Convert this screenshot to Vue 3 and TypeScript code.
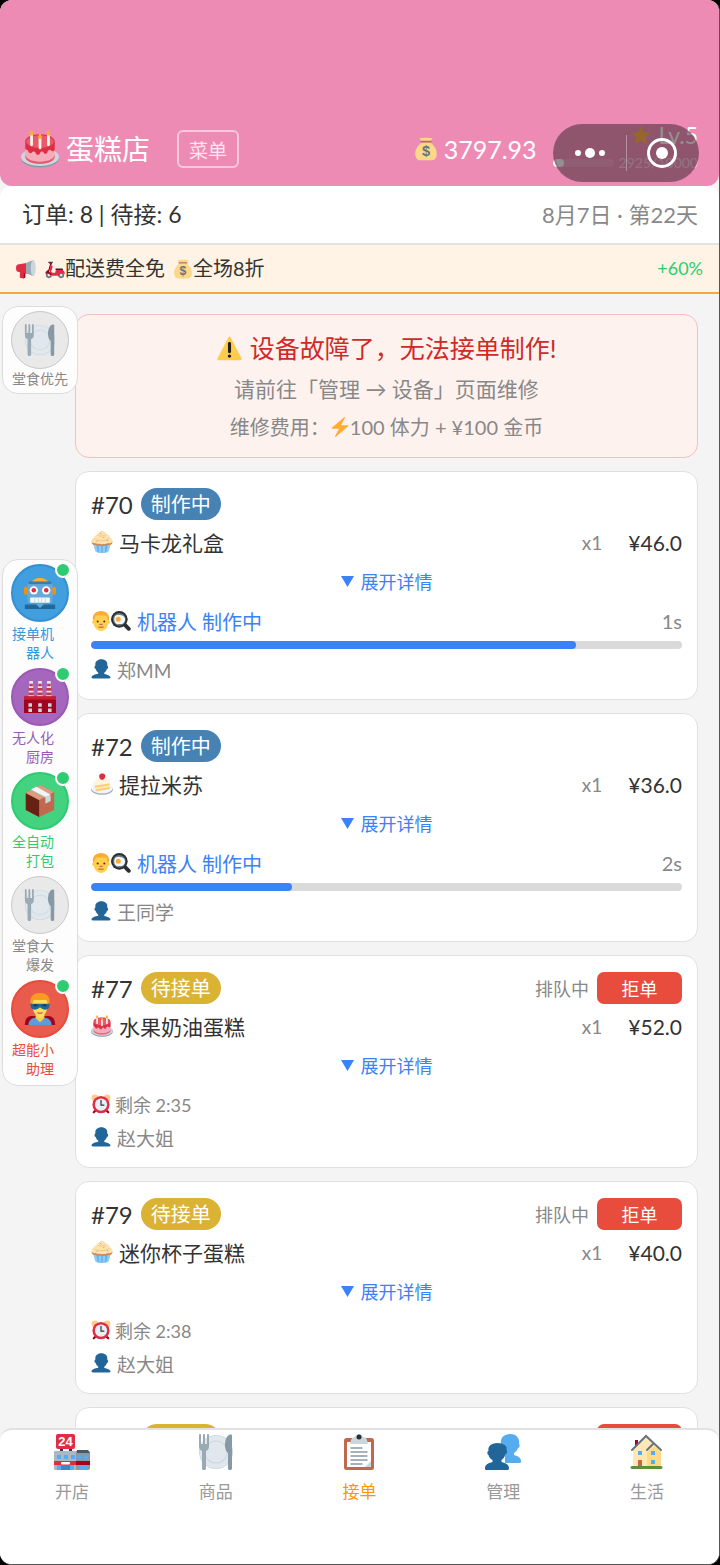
<script setup lang="ts">
interface Order {
  id: number
  status: 'cooking' | 'waiting'
  icon: string
  name: string
  price: string
  customer: string
  seconds?: number
  progress?: number
  remaining?: string
}

interface Helper {
  lines: string[]
  icon: string
  tone: string
  active: boolean
}

interface Tab {
  label: string
  icon: string
}

const orders: Order[] = [
  { id: 70, status: 'cooking', icon: 'cupcake', name: '马卡龙礼盒', price: '46.0', customer: '郑MM', seconds: 1, progress: 82 },
  { id: 72, status: 'cooking', icon: 'shortcake', name: '提拉米苏', price: '36.0', customer: '王同学', seconds: 2, progress: 34 },
  { id: 77, status: 'waiting', icon: 'cake', name: '水果奶油蛋糕', price: '52.0', customer: '赵大姐', remaining: '2:35' },
  { id: 79, status: 'waiting', icon: 'cupcake', name: '迷你杯子蛋糕', price: '40.0', customer: '赵大姐', remaining: '2:38' },
  { id: 80, status: 'waiting', icon: 'cake', name: '水果奶油蛋糕', price: '52.0', customer: '王同学', remaining: '2:40' },
]

const helpers: Helper[] = [
  { lines: ['接单机', '器人'], icon: 'robot', tone: 'blue', active: true },
  { lines: ['无人化', '厨房'], icon: 'factory', tone: 'purple', active: true },
  { lines: ['全自动', '打包'], icon: 'package', tone: 'green', active: true },
  { lines: ['堂食大', '爆发'], icon: 'plate', tone: 'gray', active: false },
  { lines: ['超能小', '助理'], icon: 'hero', tone: 'red', active: true },
]

const tabs: Tab[] = [
  { label: '开店', icon: 'store' },
  { label: '商品', icon: 'plate' },
  { label: '接单', icon: 'clipboard' },
  { label: '管理', icon: 'people' },
  { label: '生活', icon: 'house' },
]

const currentTab = '接单'
</script>

<template>
  <svg class="sprite" aria-hidden="true">
    <symbol id="cake" viewBox="0 0 36 36">
      <ellipse cx="18" cy="27" rx="18" ry="8.5" fill="#8899a6" />
      <ellipse cx="18" cy="25.5" rx="18" ry="8.5" fill="#ccd6dd" />
      <path d="M4 13v12c0 4 6 7 14 7s14-3 14-7V13z" fill="#f4abba" />
      <path d="M4 25c0 4 6 7 14 7s14-3 14-7v-2c0 4-6 7-14 7S4 27 4 23z" fill="#ea596e" />
      <path d="M4 11c0-4 6-7 14-7s14 3 14 7v7c0 2-2 3-3.500 1.500C27 18 25.500 19 25 21s-3 2-3.500.5-3-1.500-3.500.5-3.500 2-4 0-3-2-4-.5-3 0-3.200-1.500S4 19 4 17z" fill="#dd2e44" />
      <ellipse cx="18" cy="11" rx="13" ry="6" fill="#ea596e" />
      <path d="M10 5v9M26 5v9M18 8v9" stroke="#fff8e8" stroke-width="2.600" stroke-linecap="round" />
      <path d="M10 0c2 2 2.500 5 0 5.500C7.500 5 8 2 10 0zM26 0c2 2 2.500 5 0 5.500C23.500 5 24 2 26 0zM18 3c2 2 2.500 5 0 5.500C15.500 8 16 5 18 3z" fill="#ffac33" />
    </symbol>
    <symbol id="cupcake" viewBox="0 0 36 36">
      <path d="M3 19l4 14c4 4 18 4 22 0l4-14z" fill="#8ccaf7" />
      <path d="M9 22l2 12 2 1-1-13zM17 23v12h2V23zM24 22l-1 13 2-1 2-12z" fill="#5dadec" />
      <path d="M1 18c0-3 2-4 4-5 0-4 3-5 5-6 2-4 5-6 8-6s5 2 7 5c4 1 6 4 6 7 3 1 4 3 4 6 0 4-5 4-8 4-4 2-14 2-19 0-4 0-7-1-7-5z" fill="#c98a55" />
      <path d="M1 16c0-3 2-4 4-5 0-3 3-4 5-5 2-3 5-5 8-5s5 1 7 4c4 1 6 3 6 6 3 1 4 3 4 5 0 5-5 4-8 4-4 2-14 2-19 0-4 0-7 0-7-4z" fill="#ffe1ad" />
      <path d="M6 13c6 4 18 4 24-1M11 7c4 2 10 2 14-1" stroke="#f3c587" stroke-width="1.500" fill="none" />
      <path d="M15 4l2 1M22 10l-2 1M11 16l-2 1M26 15l2 1" stroke="#e8896f" stroke-width="1.500" />
    </symbol>
    <symbol id="shortcake" viewBox="0 0 36 36">
      <ellipse cx="18" cy="27" rx="18" ry="8.500" fill="#99aab5" />
      <ellipse cx="18" cy="25" rx="17.500" ry="8.500" fill="#f1f5f8" />
      <path d="M5 17l25-6 1 15-23 4z" fill="#ffcc66" />
      <path d="M3 16c3-4 12-10 18-10 5 0 9 3 10 6v5L5 21z" fill="#fff4df" />
      <path d="M6 24l25-4v3L7 27z" fill="#f8e8ce" />
      <path d="M14 8c-2-4 1-8 5-7 4 0 6 4 3 8-2 3-6 3-8-1z" fill="#dd2e44" />
    </symbol>
    <symbol id="bag" viewBox="0 0 36 36">
      <path d="M12 7L8 2c4-1 16-1 20 0l-4 5z" fill="#fdd888" />
      <path d="M12 8c-7 5-11 12-10 19 1 6 4 8 8 8h16c4 0 7-2 8-8 1-7-3-14-10-19z" fill="#fdd888" />
      <path d="M11 7h14" stroke="#bf6952" stroke-width="2.500" stroke-linecap="round" />
      <text x="18" y="29" text-anchor="middle" font-family="Liberation Sans" font-size="22" font-weight="bold" fill="#67757f">$</text>
    </symbol>
    <symbol id="star" viewBox="0 0 36 36">
      <path d="M18 1l5 12 12 1-9 8 3 13-11-7-11 7 3-13-9-8 12-1z" fill="#ffac33" />
    </symbol>
    <symbol id="megaphone" viewBox="0 0 36 36">
      <path d="M8 20h9v12c0 4-8 4-8 0z" fill="#a0041e" />
      <path d="M3 10l24-4v22L3 23c-4-1-4-12 0-13z" fill="#dd2e44" />
      <path d="M18 7L31 2v29l-13-6z" fill="#99aab5" />
      <ellipse cx="31" cy="16.500" rx="4.500" ry="14.500" fill="#ccd6dd" />
      <path d="M7 21v13h7V22" fill="#dd2e44" />
    </symbol>
    <symbol id="scooter" viewBox="0 0 36 36">
      <circle cx="7" cy="29" r="5.500" fill="#66757f" /><circle cx="29" cy="29" r="5.500" fill="#66757f" />
      <circle cx="7" cy="29" r="2.500" fill="#e1e8ed" /><circle cx="29" cy="29" r="2.500" fill="#e1e8ed" />
      <path d="M7 7h6l-2 5-4 12c5 0 6 2 7 5H9C8 26 4 24 1 27c-1-3 2-6 5-7L9 9z" fill="#a0041e" />
      <path d="M10 11l4 2-3 10c2 2 5 2 7 2l2-6h11c3 2 5 5 5 8-4-3-9-2-10 3H13l-5-8z" fill="#dd2e44" />
      <path d="M19 17h12c2 0 2 3 0 3H19z" fill="#292f33" />
      <path d="M6 6h8" stroke="#292f33" stroke-width="2" />
    </symbol>
    <symbol id="warning" viewBox="0 0 36 36">
      <path d="M2.653 35C.811 35-.001 33.662.847 32.027L16.456 1.972c.849-1.635 2.238-1.635 3.087 0l15.609 30.056c.85 1.634.037 2.972-1.805 2.972H2.653z" fill="#ffcc4d" />
      <path d="M15.583 28.953c0-1.333 1.085-2.418 2.419-2.418 1.333 0 2.418 1.085 2.418 2.418 0 1.334-1.086 2.419-2.418 2.419-1.334 0-2.419-1.085-2.419-2.419zm.186-18.293c0-1.302.961-2.108 2.232-2.108 1.241 0 2.233.837 2.233 2.108v11.938c0 1.271-.992 2.108-2.233 2.108-1.271 0-2.232-.807-2.232-2.108z" fill="#231f20" />
    </symbol>
    <symbol id="bolt" viewBox="0 0 36 36">
      <path d="M32.938 15.651C32.792 15.260 32.418 15 32 15H19.925L26.890 1.458c.219-.426.106-.947-.271-1.243C26.437.071 26.218 0 26 0c-.233 0-.466.082-.653.243L3.347 19.243c-.316.273-.430.714-.284 1.105S3.582 21 4 21h12.075L9.110 34.542c-.219.426-.106.947.271 1.243.182.144.401.215.619.215.233 0 .466-.082.653-.243l22-19c.317-.273.430-.714.285-1.106z" fill="#ffac33" />
    </symbol>
    <symbol id="plate" viewBox="0 0 36 36">
      <circle cx="18" cy="18" r="17" fill="#ccd6dd" />
      <circle cx="18" cy="18" r="16.200" fill="#e1e8ed" />
      <circle cx="18" cy="18" r="11.500" fill="#ccd6dd" />
      <circle cx="18" cy="18" r="10.600" fill="#e1e8ed" />
      <path d="M1 1v11c0 3 1 4 3 5v17c0 3 4 3 4 0V17c2-1 3-2 3-5V1c0-1.300-2-1.300-2 0v9H7V1c0-1.300-2-1.300-2 0v9H3V1c0-1.300-2-1.300-2 0z" fill="#99aab5" />
      <path d="M34 1c-4-2-7 4-7 10 0 3 1 7 3 8v15c0 3 4 3 4 0z" fill="#8899a6" />
    </symbol>
    <symbol id="robot" viewBox="0 0 36 36">
      <path d="M8 7c3-8 17-8 20 0z" fill="#ffac33" />
      <rect x="0" y="11" width="5" height="9" rx="2" fill="#f4900c" /><rect x="31" y="11" width="5" height="9" rx="2" fill="#f4900c" />
      <path d="M4 7h28v22H4z" fill="#66a9dd" />
      <path d="M5 5h26v3H5z" fill="#407aa8" />
      <path d="M1 31h34v5H1z" fill="#226699" />
      <path d="M13 30h10l-5 5z" fill="#55acee" />
      <circle cx="11" cy="15" r="4.700" fill="#fff" /><circle cx="25" cy="15" r="4.700" fill="#fff" />
      <circle cx="11" cy="15" r="2.500" fill="#dd2e44" /><circle cx="25" cy="15" r="2.500" fill="#dd2e44" />
      <rect x="7" y="23" width="22" height="6" rx="1" fill="#f5f8fa" />
      <path d="M12 23v6M16 23v6M20 23v6M24 23v6" stroke="#bdd4e5" />
    </symbol>
    <symbol id="factory" viewBox="0 0 36 36">
      <path d="M6 0h4l1 18H5zM16 0h4l1 18h-6zM26 0h4l1 18h-6z" fill="#e1e8ed" />
      <path d="M6 3h4v3H6zM5 8h6v3H5zM5 13h6v3H5zM16 3h4v3h-4zM15 8h6v3h-6zM15 13h6v3h-6zM26 3h4v3h-4zM25 8h6v3h-6zM25 13h6v3h-6z" fill="#c23a4c" />
      <path d="M0 18h36v18H0z" fill="#a0041e" />
      <path d="M0 17h36v4H0z" fill="#c41f35" />
      <path d="M5 25h4v4H5zM16 25h4v4h-4zM27 25h4v4h-4zM5 31h4v4H5zM16 31h4v4h-4zM27 31h4v4h-4z" fill="#ccd6dd" />
    </symbol>
    <symbol id="package" viewBox="0 0 36 36">
      <path d="M18 0l16 8v20L17 36 2 28V9z" fill="#c1694f" />
      <path d="M2 9l15 8v19L2 28z" fill="#662113" />
      <path d="M2 9L18 0l16 8-17 9z" fill="#d99e82" />
      <path d="M8 5l16 9v7l6-3v-6L14 2z" fill="#ccd6dd" />
      <path d="M8 5l16 8 6-2L14 2z" fill="#f1f5f8" />
    </symbol>
    <symbol id="hero" viewBox="0 0 36 36">
      <path d="M1 36c0-7 3-10 8-10h18c5 0 8 3 8 10z" fill="#a0041e" />
      <path d="M5 36c0-5 3-8 8-8h10c5 0 8 3 8 8z" fill="#5c9dd9" />
      <path d="M13 24h10v4l-5 5-5-5z" fill="#ffcc4d" />
      <path d="M9 9c0-9 18-9 18 0 0 9-2 16-9 19-7-3-9-10-9-19z" fill="#ffdc5d" />
      <path d="M8 14C5 5 10 0 18 0s13 5 10 14c-2-2-2-5-3-6H11c-1 1-1 4-3 6z" fill="#f99b1c" />
      <path d="M7 12h22l-1 5c-3 3-7 2-10-1-3 3-7 4-10 1z" fill="#226699" />
      <path d="M11 14h4M21 14h4" stroke="#292f33" stroke-width="2" />
      <path d="M15 22c2 1 4 1 6 0" stroke="#c1694f" stroke-width="1.500" fill="none" />
    </symbol>
    <symbol id="man" viewBox="0 0 36 36">
      <circle cx="5" cy="20" r="3" fill="#ffc842" /><circle cx="31" cy="20" r="3" fill="#ffc842" />
      <path d="M5 12c0-12 26-12 26 0v10c0 7-6 14-13 14S5 29 5 22z" fill="#ffd04f" />
      <path d="M4 18C1 7 8 0 18 0s17 7 14 18c-3-2-3-6-4-9C24 7 15 9 9 8c-2 3-2 7-5 10z" fill="#ffac33" />
      <circle cx="12" cy="19" r="1.800" fill="#662113" /><circle cx="24" cy="19" r="1.800" fill="#662113" />
      <path d="M16 24h4M14 29h8" stroke="#c1694f" stroke-width="2" fill="none" stroke-linecap="round" />
    </symbol>
    <symbol id="pan" viewBox="0 0 36 36">
      <path d="M25 25l7 7" stroke="#292f33" stroke-width="7" stroke-linecap="round" />
      <circle cx="15" cy="15" r="15" fill="#292f33" />
      <circle cx="15" cy="15" r="11.500" fill="#66757f" />
      <path d="M6 13c1-8 9-7 14-5 6 2 7 9 3 13-3 4-7 1-10 3-5 0-8-6-7-11z" fill="#f5f8fa" />
      <circle cx="13" cy="15" r="4.500" fill="#ffac33" />
    </symbol>
    <symbol id="bust" viewBox="0 0 36 36">
      <path d="M24 26.799v-2.566c2-1.348 4.080-3.779 4.703-6.896.186.103.206.170.413.170.991 0 1.709-1.287 1.709-2.873 0-1.562-.823-2.827-1.794-2.865.187-.674.293-1.577.293-2.735C29.324 5.168 26 .527 18.541.527c-6.629 0-10.777 4.641-10.777 8.507 0 1.123.069 2.043.188 2.755-.911.137-1.629 1.352-1.629 2.845 0 1.587.804 2.873 1.796 2.873.206 0 .025-.067.209-.170C8.952 20.453 11 22.885 13 24.232v2.414c-5 .645-12 3.437-12 6.230v1.061C1 35 2.076 35 3.137 35h29.725C33.924 35 35 35 35 33.938v-1.061c0-2.615-6-5.225-11-6.078z" fill="#226699" />
    </symbol>
    <symbol id="alarm" viewBox="0 0 36 36">
      <path d="M9 29l-4 4M27 29l4 4" stroke="#a0041e" stroke-width="4" stroke-linecap="round" />
      <circle cx="7" cy="7" r="6" fill="#ffcc8d" /><circle cx="29" cy="7" r="6" fill="#ffcc8d" />
      <circle cx="18" cy="19" r="15.500" fill="#dd2e44" />
      <circle cx="18" cy="19" r="11" fill="#e8f0f5" />
      <path d="M18 11v9h6" stroke="#31373d" stroke-width="2.200" fill="none" />
    </symbol>
    <symbol id="store" viewBox="0 0 36 36">
      <path d="M6 13h3v4H6zM15 13h3v4h-3z" fill="#31373d" />
      <rect x="2" y="0" width="19" height="15" rx="2" fill="#dd2e44" />
      <text x="11.500" y="12" text-anchor="middle" font-family="Liberation Sans" font-size="13" font-weight="bold" fill="#fff">24</text>
      <rect x="0" y="17" width="36" height="19" rx="2" fill="#8899a6" />
      <path d="M0 19c0-2 1-2 2-2h20v19H2c-1 0-2-1-2-2z" fill="#aab8c2" />
      <path d="M23 16h11l2 3H23z" fill="#4d5962" />
      <path d="M0 27h36v4H0z" fill="#a0041e" /><path d="M0 27h22v4H0z" fill="#dd2e44" />
      <path d="M3 21h4v4H3zM10 21h4v4h-4zM17 21h4v4h-4zM24 21h3v4h-3zM30 21h4v4h-4zM3 31h4v5H3zM16 31h4v5h-4zM25 31h9v5h-9z" fill="#55acee" />
      <path d="M7 31h9v5H7z" fill="#3b88c3" />
      <rect x="7" y="28" width="9" height="2.500" rx="1" fill="#fff" />
    </symbol>
    <symbol id="clipboard" viewBox="0 0 36 36">
      <rect x="3" y="4" width="30" height="32" rx="2.500" fill="#c1694f" />
      <path d="M6 8h24v25H6z" fill="#fff" />
      <path d="M24 33l6-6v6z" fill="#ccd6dd" />
      <path d="M9 10h18l-1-4c-1-2-2-3-4-3-1-4-7-4-8 0-2 0-3 1-4 3z" fill="#ccd6dd" />
      <circle cx="18" cy="3" r="2.500" fill="#292f33" />
      <path d="M10 14h11M10 18h16M10 22h16M10 26h16M10 30h11" stroke="#8899a6" stroke-width="1.400" stroke-linecap="round" />
    </symbol>
    <symbol id="people" viewBox="0 0 36 36">
      <path d="M29 21v-2c2-1 3-3 4-5 2 0 2-4 1-4C35 4 31 0 25.500 0 19 0 15 4 16 10c-1 1-1 4 1 5 1 2 2 4 3 5v9h15c1 0 1-1 1-2 0-3-3-5-7-6z" fill="#55acee" />
      <path d="M16.500 28v-2c2-1 3-3 4-6 2 0 2-4 1-4 1-4-3-7-9-7-7 0-10 4-9 8-2 0-1 4 0 4 1 3 2 4 4 5v2C3 29 0 31 0 34c0 2 0 2 2 2h20c1 0 2 0 2-2 0-3-3-5-7.500-6z" fill="#226699" />
    </symbol>
    <symbol id="house" viewBox="0 0 36 36">
      <path d="M6 6h3v8H6z" fill="#a0041e" />
      <path d="M4 16L17 3l15 13v17H4z" fill="#ffe8b6" />
      <path d="M18 19l7-7 7 6v15H18z" fill="#ffd983" />
      <path d="M3 16L17 2l15 14M18 16l6-6" stroke="#66757f" stroke-width="2" fill="none" stroke-linecap="round" />
      <path d="M9 17h4v4H9zM22 17h4v4h-4zM22 26h4v4h-4z" fill="#55acee" />
      <path d="M9 26h4v7H9z" fill="#c1694f" />
      <path d="M3 32h29c2 0 2 3 0 3H3c-2 0-2-3 0-3z" fill="#5c913b" />
    </symbol>
  </svg>

  <div class="screen">
    <header class="top">
      <h1 class="shop"><svg class="shop-icon"><use href="#cake" /></svg>蛋糕店</h1>
      <button class="menu" type="button">菜单</button>
      <div class="money"><svg class="money-icon"><use href="#bag" /></svg>3797.93</div>
      <div class="level">
        <div class="level-name"><svg class="star-icon"><use href="#star" /></svg>Lv.5</div>
        <div class="level-exp">
          <span class="exp-track"><span class="exp-fill"></span></span>
          <span>2925/10000</span>
        </div>
      </div>
      <div class="capsule">
        <button class="capsule-button" type="button" aria-label="更多">
          <svg width="34" height="14" viewBox="0 0 34 14" fill="#fff"><circle cx="5" cy="7" r="3" /><circle cx="17" cy="7" r="5" /><circle cx="29" cy="7" r="3" /></svg>
        </button>
        <span class="capsule-line"></span>
        <button class="capsule-button" type="button" aria-label="关闭">
          <svg width="30" height="30" viewBox="0 0 30 30"><circle cx="15" cy="15" r="13.500" fill="none" stroke="#fff" stroke-width="3" /><circle cx="15" cy="15" r="6" fill="#fff" /></svg>
        </button>
      </div>
    </header>

    <section class="summary">
      <span>订单: 8 | 待接: 6</span>
      <span class="date">8月7日 · 第22天</span>
    </section>

    <section class="promo">
      <svg class="promo-icon promo-lead"><use href="#megaphone" /></svg>
      <span class="promo-item"><svg class="promo-icon"><use href="#scooter" /></svg>配送费全免</span>
      <span class="promo-item"><svg class="promo-icon"><use href="#bag" /></svg>全场8折</span>
      <span class="boost">+60%</span>
    </section>

    <main class="body">
      <div class="list">
        <section class="alert" role="alert">
          <h2 class="alert-title"><svg class="alert-icon"><use href="#warning" /></svg>设备故障了，无法接单制作!</h2>
          <p class="alert-hint">请前往「管理 → 设备」页面维修</p>
          <p class="alert-cost">维修费用：<svg class="bolt-icon"><use href="#bolt" /></svg>100 体力 + ¥100 金币</p>
        </section>

        <article v-for="order in orders" :key="order.id" class="card">
          <div class="head">
            <span class="number">#{{ order.id }}</span>
            <span class="pill" :class="order.status">{{ order.status === 'cooking' ? '制作中' : '待接单' }}</span>
            <template v-if="order.status === 'waiting'">
              <span class="queue">排队中</span>
              <button class="reject" type="button">拒单</button>
            </template>
          </div>
          <div class="item">
            <svg class="item-icon"><use :href="'#' + order.icon" /></svg>
            <span class="item-name">{{ order.name }}</span>
            <span class="quantity">x1</span>
            <span class="price">¥{{ order.price }}</span>
          </div>
          <button class="expand" type="button">
            <svg width="13" height="11" viewBox="0 0 13 11"><path d="M0 0h13L6.500 11z" fill="#3b82f6" /></svg>展开详情
          </button>
          <template v-if="order.status === 'cooking'">
            <div class="maker">
              <svg class="small-icon"><use href="#man" /></svg>
              <svg class="small-icon"><use href="#pan" /></svg>
              <span class="maker-name">机器人 制作中</span>
              <span class="seconds">{{ order.seconds }}s</span>
            </div>
            <div class="track" role="progressbar" aria-label="制作进度" :aria-valuenow="order.progress">
              <div class="fill" :style="{ width: order.progress + '%' }"></div>
            </div>
          </template>
          <div v-else class="timer"><svg class="small-icon"><use href="#alarm" /></svg>剩余 {{ order.remaining }}</div>
          <div class="customer"><svg class="small-icon"><use href="#bust" /></svg>{{ order.customer }}</div>
        </article>
      </div>

      <aside class="float priority">
        <button class="helper gray" type="button">
          <span class="disc"><svg class="disc-icon"><use href="#plate" /></svg></span>
          <span class="priority-label">堂食优先</span>
        </button>
      </aside>

      <aside class="float helpers">
        <button v-for="helper in helpers" :key="helper.icon" class="helper" :class="helper.tone" type="button">
          <span class="disc">
            <svg class="disc-icon"><use :href="'#' + helper.icon" /></svg>
            <span v-if="helper.active" class="dot"></span>
          </span>
          <span class="helper-label">{{ helper.lines[0] }}<br />{{ helper.lines[1] }}</span>
        </button>
      </aside>
    </main>

    <nav class="tabs">
      <button v-for="tab in tabs" :key="tab.label" class="tab" :class="{ current: tab.label === currentTab }" type="button">
        <svg class="tab-icon"><use :href="'#' + tab.icon" /></svg>
        <span>{{ tab.label }}</span>
      </button>
    </nav>
  </div>
</template>

<style>
body {
  background: #000;
}
</style>

<style scoped>
* {
  box-sizing: border-box;
}
svg {
  display: block;
  flex: none;
}
button {
  border: 0;
  padding: 0;
  background: none;
  font: inherit;
  color: inherit;
}
h1,
h2,
p {
  margin: 0;
  font-weight: 400;
}
.sprite {
  position: absolute;
  width: 0;
  height: 0;
}
.screen {
  display: flex;
  flex-direction: column;
  height: 100vh;
  overflow: hidden;
  border-right: 1px solid #555;
  border-bottom: 1px solid #555;
  border-radius: 12px;
  background: #f4f4f4;
  color: #333;
  font-family: Lato, "Noto Sans CJK SC", sans-serif;
}
.top {
  position: relative;
  display: flex;
  align-items: center;
  flex: none;
  padding: 120px 21px 8px;
  border-radius: 0 0 12px 12px;
  background: #ee8bb5;
  color: #fff;
}
.shop {
  display: flex;
  align-items: center;
  gap: 7px;
  font-size: 28px;
  line-height: 58px;
}
.shop-icon {
  width: 38px;
  height: 38px;
}
.menu {
  height: 38px;
  margin-left: 27px;
  padding: 0 10px;
  border: 2px solid #f8c8dd;
  border-radius: 6px;
  color: #fde6f0;
  font-size: 19px;
}
.money {
  display: flex;
  align-items: center;
  gap: 6px;
  margin-left: auto;
  margin-right: 16px;
  font-size: 25px;
}
.money-icon {
  width: 24px;
  height: 26px;
}
.level {
  display: flex;
  flex-direction: column;
  align-items: flex-end;
}
.level-name {
  display: flex;
  align-items: center;
  gap: 7px;
  font-size: 23px;
  line-height: 28px;
}
.star-icon {
  width: 20px;
  height: 20px;
}
.level-exp {
  display: flex;
  align-items: center;
  gap: 5px;
  color: #f6c8dc;
  font-size: 14px;
  line-height: 28px;
}
.exp-track {
  width: 61px;
  height: 8px;
  overflow: hidden;
  border-radius: 4px;
  background: #f29cc0;
}
.exp-fill {
  display: block;
  width: 18%;
  height: 8px;
  border-radius: 4px;
  background: #fff;
}
.capsule {
  position: absolute;
  right: 20px;
  bottom: 4px;
  display: flex;
  align-items: center;
  width: 146px;
  height: 58px;
  border: 2px solid rgba(150, 90, 120, 0.4);
  border-radius: 29px;
  background: rgba(45, 32, 38, 0.5);
}
.capsule-button {
  display: flex;
  flex: 1;
  justify-content: center;
}
.capsule-line {
  width: 1px;
  height: 36px;
  background: rgba(255, 255, 255, 0.35);
}
.summary {
  display: flex;
  align-items: center;
  justify-content: space-between;
  flex: none;
  padding: 0 21px 0 22px;
  border-bottom: 2px solid #e2e2e2;
  border-radius: 12px 12px 0 0;
  background: #fff;
  font-size: 23px;
  line-height: 57px;
}
.date {
  color: #888;
  font-size: 22px;
}
.promo {
  display: flex;
  align-items: center;
  flex: none;
  gap: 8px;
  padding: 0 16px 0 15px;
  border-bottom: 2px solid #f5a83c;
  background: #fef3e4;
  font-size: 20px;
  line-height: 47px;
}
.promo-item {
  display: flex;
  align-items: center;
}
.promo-icon {
  width: 20px;
  height: 20px;
}
.promo-lead {
  width: 22px;
}
.boost {
  margin-left: auto;
  color: #2ecc71;
  font-size: 18px;
}
.body {
  position: relative;
  flex: 1;
  min-height: 0;
}
.list {
  display: flex;
  flex-direction: column;
  gap: 13px;
  height: 100%;
  padding: 20px 21px 13px 75px;
  overflow-y: auto;
  scrollbar-width: none;
}
.alert {
  flex: none;
  padding: 17px 16px;
  border: 1px solid #f3bfc1;
  border-radius: 14px;
  background: #fef2ef;
  color: #888;
  text-align: center;
}
.alert-title {
  display: flex;
  align-items: center;
  justify-content: center;
  gap: 8px;
  color: #cf2a27;
  font-size: 25px;
  line-height: 32px;
}
.alert-icon {
  width: 25px;
  height: 25px;
}
.alert-hint {
  margin-top: 11px;
  font-size: 21px;
  line-height: 28px;
}
.alert-cost {
  display: flex;
  justify-content: center;
  align-items: center;
  margin-top: 11px;
  font-size: 20px;
  line-height: 26px;
}
.bolt-icon {
  width: 20px;
  height: 20px;
}
.card {
  flex: none;
  padding: 16px 15px 17px;
  border: 1px solid #e0e0e0;
  border-radius: 14px;
  background: #fff;
}
.head {
  display: flex;
  align-items: center;
  gap: 8px;
  height: 32px;
}
.number {
  font-size: 24px;
}
.pill {
  padding: 0 10px;
  border-radius: 16px;
  color: #fff;
  font-size: 20px;
  line-height: 32px;
}
.cooking {
  background: #4682b4;
}
.waiting {
  background: #dab334;
}
.queue {
  margin-left: auto;
  color: #888;
  font-size: 18px;
}
.reject {
  width: 85px;
  height: 32px;
  border-radius: 7px;
  background: #e74c3c;
  color: #fff;
  font-size: 18px;
}
.item {
  display: flex;
  align-items: center;
  height: 28px;
  margin-top: 8px;
  font-size: 21px;
}
.item-icon {
  width: 22px;
  height: 22px;
  margin-right: 6px;
}
.quantity {
  margin-left: auto;
  margin-right: 26px;
  color: #888;
  font-size: 19px;
}
.expand {
  display: flex;
  align-items: center;
  justify-content: center;
  gap: 7px;
  width: 100%;
  height: 24px;
  margin-top: 13px;
  color: #3b82f6;
  font-size: 18px;
}
.maker {
  display: flex;
  align-items: center;
  height: 26px;
  margin-top: 15px;
  color: #3b82f6;
  font-size: 20px;
}
.small-icon {
  width: 20px;
  height: 20px;
}
.maker-name {
  margin-left: 6px;
}
.seconds {
  margin-left: auto;
  color: #888;
}
.track {
  height: 8px;
  margin-top: 7px;
  overflow: hidden;
  border-radius: 4px;
  background: #dadada;
}
.fill {
  height: 8px;
  border-radius: 4px;
  background: #3b82f6;
}
.timer {
  display: flex;
  align-items: center;
  gap: 4px;
  height: 24px;
  margin-top: 15px;
  color: #888;
  font-size: 18px;
}
.customer {
  display: flex;
  align-items: center;
  gap: 6px;
  height: 26px;
  margin-top: 7px;
  color: #888;
  font-size: 19px;
}
.timer + .customer {
  margin-top: 8px;
}
.float {
  position: absolute;
  left: 2px;
  display: flex;
  flex-direction: column;
  width: 76px;
  padding: 4px 8px 7px;
  border: 1px solid #ddd;
  border-radius: 16px;
  background: #fdfdfd;
}
.priority {
  top: 12px;
  padding-bottom: 5px;
}
.helpers {
  top: 265px;
  gap: 6px;
}
.helper {
  display: flex;
  flex-direction: column;
  align-items: center;
  gap: 2px;
  font-size: 14px;
  line-height: 19px;
}
.priority .helper {
  gap: 0;
}
.disc {
  position: relative;
  display: flex;
  align-items: center;
  justify-content: center;
  width: 58px;
  height: 58px;
  border: 2px solid;
  border-radius: 50%;
}
.disc-icon {
  width: 32px;
  height: 32px;
}
.dot {
  position: absolute;
  top: -4px;
  right: -4px;
  width: 16px;
  height: 16px;
  border: 2px solid #fff;
  border-radius: 50%;
  background: #2ecc71;
}
.helper-label {
  align-self: flex-start;
  width: 43px;
  text-align: right;
}
.gray {
  color: #888;
}
.gray .disc {
  border: 1px solid #c8c8c8;
  background: #e9e9e9;
}
.blue {
  color: #3498db;
}
.blue .disc {
  border-color: #3490d0;
  background: #429fdf;
}
.purple {
  color: #9b59b6;
}
.purple .disc {
  border-color: #9b59b6;
  background: #a566be;
}
.green {
  color: #2ecc71;
}
.green .disc {
  border-color: #2ecc71;
  background: #43d27f;
}
.red {
  color: #e74c3c;
}
.red .disc {
  border-color: #e74c3c;
  background: #e95b4d;
}
.tabs {
  display: flex;
  flex: none;
  height: 136px;
  padding-top: 4px;
  border-top: 2px solid #e2e2e2;
  border-radius: 12px 12px 0 0;
  background: #fff;
  color: #999;
  font-size: 17px;
  line-height: 24px;
}
.tab {
  display: flex;
  flex: 1;
  flex-direction: column;
  align-items: center;
  gap: 10px;
}
.tab-icon {
  width: 36px;
  height: 36px;
}
.current {
  color: #ff9500;
}
</style>
